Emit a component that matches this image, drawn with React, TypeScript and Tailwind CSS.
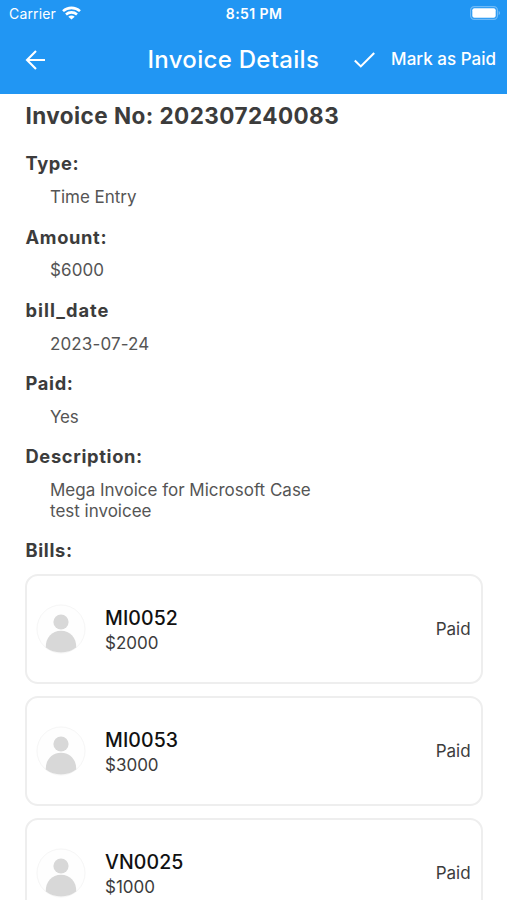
const details = [
  { label: 'Type:', value: 'Time Entry', labelSpacing: 'tracking-[0.65px]', spacing: 'tracking-[-0.03px]' },
  { label: 'Amount:', value: '$6000', labelSpacing: 'tracking-[0.65px]', spacing: 'tracking-[0.1px]' },
  { label: 'bill_date', value: '2023-07-24', labelSpacing: 'tracking-[1px]', spacing: 'tracking-[0.12px]' },
  { label: 'Paid:', value: 'Yes', labelSpacing: 'tracking-[0.65px]', spacing: 'tracking-[-0.2px]' },
  {
    label: 'Description:',
    value: 'Mega Invoice for Microsoft Case\ntest invoicee',
    labelSpacing: 'tracking-[0.65px]',
    spacing: 'tracking-[-0.01px]',
  },
];

const bills = [
  { code: 'MI0052', amount: '$2000', status: 'Paid' },
  { code: 'MI0053', amount: '$3000', status: 'Paid' },
  { code: 'VN0025', amount: '$1000', status: 'Paid' },
];

function WifiIcon() {
  return (
    <svg width="19" height="14" viewBox="0 0 19 14" fill="none" stroke="#fff" strokeWidth="2.6">
      <path d="M1 5.1C5.8 0.8 13.2 0.8 18 5.1" />
      <path d="M4 8.5C7.1 5.7 11.9 5.7 15 8.5" />
      <path d="M9.5 13.6L6.3 10.7C8.1 9.1 10.9 9.1 12.7 10.7Z" fill="#fff" stroke="none" />
    </svg>
  );
}

function BatteryIcon() {
  return (
    <svg width="31" height="14" viewBox="0 0 31 14">
      <rect x="0.6" y="0.6" width="26.8" height="12.8" rx="3.6" fill="none" stroke="#fff" strokeOpacity="0.35" strokeWidth="1.2" />
      <rect x="2.3" y="2.3" width="23.4" height="9.4" rx="2" fill="#fff" />
      <path d="M28.7 4.8C30.4 5.5 30.4 8.5 28.7 9.2Z" fill="#fff" fillOpacity="0.4" />
    </svg>
  );
}

function StatusBar() {
  return (
    <div className="grid h-[26px] grid-cols-3 items-center pr-[6px] pb-[0.5px] pl-[9px] text-[14px]">
      <div className="flex items-center gap-[6px] tracking-[0.15px]">
        <span className="pt-[1px]">Carrier</span>
        <WifiIcon />
      </div>
      <span className="pt-[1px] pr-[2px] text-center text-[14px] font-semibold tracking-[0.4px]">8:51 PM</span>
      <div className="flex justify-end">
        <BatteryIcon />
      </div>
    </div>
  );
}

function Header() {
  return (
    <header className="h-[93.5px] bg-[#2196f3] text-white">
      <StatusBar />
      <div className="flex h-[67px] items-center pr-[11px] pl-[25px]">
        <svg width="21" height="20" viewBox="0 0 21 20" fill="none" stroke="#fff" strokeWidth="2.1">
          <path d="M20 10H2M11 1L2 10L11 19" />
        </svg>
        <h1 className="ml-[101.5px] text-[24px] font-[450] tracking-[0.3px] whitespace-nowrap">Invoice Details</h1>
        <button className="ml-auto flex items-center gap-[16px] text-[17px] font-[450] tracking-[0.02px] whitespace-nowrap">
          <svg width="21" height="16" viewBox="0 0 21 16" fill="none" stroke="#fff" strokeWidth="2.1">
            <path d="M0.8 8.6L6.8 14.4L20.2 1" />
          </svg>
          <span className="pt-[1px]">Mark as Paid</span>
        </button>
      </div>
    </header>
  );
}

function Avatar() {
  return (
    <svg width="50" height="50" viewBox="0 0 50 50">
      <circle cx="25" cy="25" r="24" fill="#fefefe" stroke="#f6f6f6" />
      <circle cx="25" cy="18" r="7.6" fill="#d8d8d8" />
      <path d="M9.8 43.5C9.3 34 16 26.8 25 26.8S40.7 34 40.2 43.5Q33.5 48.4 25 48.4T9.8 43.5Z" fill="#d8d8d8" />
    </svg>
  );
}

export default function App() {
  return (
    <div className="h-[900px] overflow-hidden bg-white font-['Inter',sans-serif] text-[#3c3c3c]">
      <Header />
      <main className="pt-[8.5px] pr-[24.5px] pl-[25.5px]">
        <h2 className="text-[22.5px] leading-[28px] font-bold tracking-[0.44px]">Invoice No: 202307240083</h2>
        <dl className="pt-[22.3px]">
          {details.map(({ label, value, labelSpacing, spacing }) => (
            <div key={label} className="pb-[17.9px]">
              <dt className={`text-[18.3px] leading-[22px] font-bold ${labelSpacing}`}>{label}</dt>
              <dd className={`mt-[12.9px] ml-[24.5px] text-[17px] leading-[20.5px] whitespace-pre-line text-[#555] ${spacing}`}>
                {value}
              </dd>
            </div>
          ))}
        </dl>
        <h3 className="text-[18.3px] leading-[22px] font-bold tracking-[0.65px]">Bills:</h3>
        <ul className="-ml-[0.5px] flex flex-col gap-[12px] pt-[13.2px]">
          {bills.map((bill) => (
            <li
              key={bill.code}
              className="flex h-[110px] items-center rounded-[13px] border-2 border-[#eeeeee] pr-[10px] pl-[9px]"
            >
              <Avatar />
              <div className="ml-[19px] flex-1 pt-[1px]">
                <p className="text-[19.5px] leading-[26px] font-medium tracking-[0.1px] text-[#111]">{bill.code}</p>
                <p className="text-[17px] leading-[24px] tracking-[0px]">{bill.amount}</p>
              </div>
              <span className="text-[17px] tracking-[-0.05px]">{bill.status}</span>
            </li>
          ))}
        </ul>
      </main>
    </div>
  );
}
